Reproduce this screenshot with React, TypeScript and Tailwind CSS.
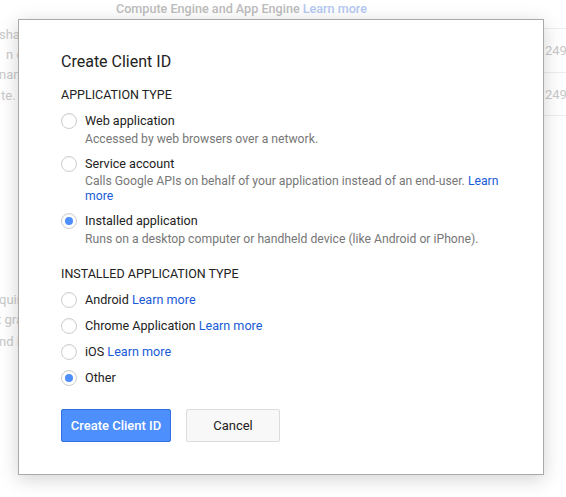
import React from 'react';

type Option = { label: string; desc?: React.ReactNode; link?: boolean; checked?: boolean };

const appTypes: Option[] = [
  { label: 'Web application', desc: 'Accessed by web browsers over a network.' },
  {
    label: 'Service account',
    desc: (
      <>
        Calls Google APIs on behalf of your application instead of an end-user.{' '}
        <span className="text-[#1a5bd8]">Learn more</span>
      </>
    ),
  },
  {
    label: 'Installed application',
    desc: 'Runs on a desktop computer or handheld device (like Android or iPhone).',
    checked: true,
  },
];

const installedTypes: Option[] = [
  { label: 'Android', link: true },
  { label: 'Chrome Application', link: true },
  { label: 'iOS', link: true },
  { label: 'Other', checked: true },
];

const Radio = ({ checked }: { checked?: boolean }) => (
  <span className="mt-[1px] flex h-4 w-4 shrink-0 items-center justify-center rounded-full border border-[#cdcdcd] bg-white shadow-[inset_0_1px_1px_rgba(0,0,0,0.05)]">
    {checked && <span className="h-2 w-2 rounded-full bg-[#4d8ffd]"></span>}
  </span>
);

const RadioRow = ({ opt }: { opt: Option }) => (
  <div className="flex items-start gap-2">
    <Radio checked={opt.checked} />
    <div className="min-w-0">
      <p className="text-[12.6px] leading-[18px] text-[#222]">
        {opt.label}
        {opt.link && <span className="text-[#1a5bd8]"> Learn more</span>}
      </p>
      {opt.desc && <p className="mt-[1.5px] text-[12.2px] leading-[15px] text-[#777]">{opt.desc}</p>}
    </div>
  </div>
);

export default function App() {
  return (
    <div className="relative h-[497px] w-[566px] overflow-hidden bg-white font-['Roboto',sans-serif]">
      {/* faded page behind the dialog */}
      <div className="text-[13px] text-[#c9c9c9]">
        <p className="h-[17px] pl-[116px] text-[12.6px] font-medium leading-[17px] text-[#bdbdbd]">
          Compute Engine and App Engine <span className="text-[#b4c9f2]">Learn more</span>
        </p>
        <div className="flex justify-between">
          <div className="whitespace-nowrap leading-[20px]">
            <p className="mt-[8px] -ml-[1px]">shared</p>
            <p className="ml-[6px]">n count</p>
            <p className="-ml-[1px]">names</p>
            <p className="mt-[1px] ml-[1px]">te.</p>
            <p className="mt-[184px] -ml-[1px]">quire</p>
            <p className="ml-[-3px]">t grant</p>
            <p className="mt-[2px] -ml-[1px]">nd it</p>
          </div>
          <div className="w-[22px] whitespace-nowrap">
            <div className="mt-[11px] h-[44px] border-t border-[#eeeeee] pl-[1px] leading-[44px]">249</div>
            <div className="h-[43px] border-t border-[#eeeeee] pl-[1px] leading-[44px]">249</div>
            <div className="border-t border-[#eeeeee]"></div>
          </div>
        </div>
      </div>

      {/* dialog */}
      <div className="absolute left-[18px] top-[19px] h-[456px] w-[526px] border border-[#a9a9a9] bg-white px-[42px] pt-[32px] shadow-[0_4px_18px_rgba(0,0,0,0.18)]">
        <h1 className="text-[16px] leading-[20px] text-[#222]">Create Client ID</h1>
        <h2 className="mt-[15px] text-[12.5px] uppercase leading-[16px] text-[#222]">Application type</h2>
        <div className="mt-[9px] flex flex-col gap-[8px]">
          {appTypes.map((o) => (
            <RadioRow key={o.label} opt={o} />
          ))}
        </div>
        <h2 className="mt-[19.5px] text-[12.5px] uppercase leading-[16px] text-[#222]">Installed application type</h2>
        <div className="mt-[9px] flex flex-col gap-[8px]">
          {installedTypes.map((o) => (
            <RadioRow key={o.label} opt={o} />
          ))}
        </div>
        <div className="mt-[22px] flex gap-[15px]">
          <button className="h-[33px] w-[110px] rounded-[2px] border border-[#2f6fe0] bg-[#4d8ffd] text-[13px] font-medium text-white">
            Create Client ID
          </button>
          <button className="h-[33px] w-[94px] rounded-[2px] border border-[#dcdcdc] bg-[#f8f8f8] text-[13px] text-[#222]">
            Cancel
          </button>
        </div>
      </div>
    </div>
  );
}
